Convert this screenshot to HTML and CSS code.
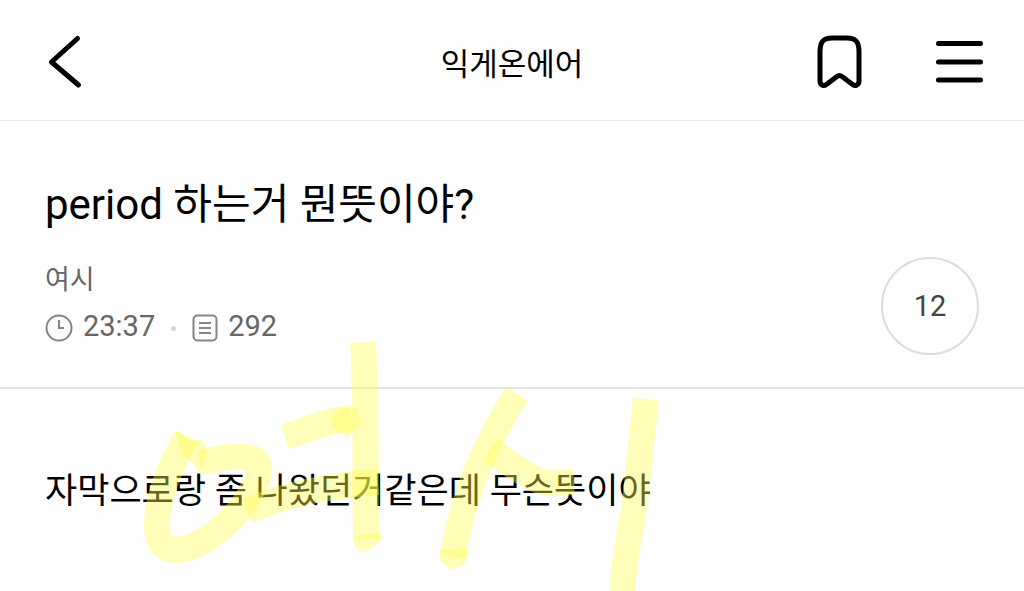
FILE: index.html
```html
<!DOCTYPE html>
<html lang="ko">
<head>
    <meta charset="utf-8" />
    <meta name="viewport" content="width=device-width, initial-scale=1" />
    <title>익게온에어</title>
    <link rel="stylesheet" href="styles.css">
</head>
<body>
    <header class="topbar">
        <button type="button" class="icon-btn" aria-label="뒤로">
            <svg width="48" height="60" viewBox="0 0 48 60" class="line-icon">
                <path d="M37.500 8.500L11.500 32L38.500 55" />
            </svg>
        </button>
        <div class="board">익게온에어</div>
        <div class="tools">
            <button type="button" class="icon-btn" aria-label="북마크">
                <svg width="48" height="60" viewBox="0 0 48 60" class="line-icon">
                    <path d="M4 22C4 11 8 8 16 8H31C39 8 43 11 43 22V51C43 55 39 57 36 54L26 46.500Q23.500 44.500 21 46.500L11 54C8 57 4 55 4 51Z" />
                </svg>
            </button>
            <button type="button" class="icon-btn" aria-label="메뉴">
                <svg width="48" height="60" viewBox="0 0 48 60" class="line-icon">
                    <path d="M2.500 13.500H44.500M2.500 32H44.500M2.500 50H44.500" />
                </svg>
            </button>
        </div>
    </header>

    <main class="post">
        <div class="post-head">
            <h1 class="title">period 하는거 뭔뜻이야?</h1>
            <div class="info">
                <div>
                    <div class="writer">여시</div>
                    <div class="meta">
                        <svg width="28" height="28" viewBox="0 0 28 28" class="meta-icon">
                            <circle cx="14" cy="14" r="12.500" />
                            <path d="M14 6V14H19" />
                        </svg>
                        <span>23:37</span>
                        <i class="dot"></i>
                        <svg width="26" height="28" viewBox="0 0 26 28" class="meta-icon">
                            <rect x="1.500" y="1.500" width="23" height="25" rx="4" />
                            <path d="M7 9H19M7 14H19M7 19H19" />
                        </svg>
                        <span>292</span>
                    </div>
                </div>
                <button type="button" class="comments" aria-label="댓글 12">12</button>
            </div>
        </div>

        <p class="content">자막으로랑 좀 나왔던거같은데 무슨뜻이야</p>

        <!-- highlighter writing over the post -->
        <svg class="marker" width="540" height="251" viewBox="130 340 540 251" aria-hidden="true">
            <path d="M187 437C168 469 157 498 157 527C157 545 167 551 178 550C205 547 234 520 247 499C259 479 263 466 255 460C246 453 222 457 200 463" />
            <path class="fill" d="M175 431L194 440L203 440L207 452L200 474L192 462L182 456Z" />
            <path d="M285 437C307 430 329 420 351 418" />
            <path class="fill" d="M332 418L340 409L355 407L361 424L347 438L333 428Z" />
            <path d="M247 511C289 493 330 486 378 482" />
            <path d="M363 342C367 407 365 473 366 539" />
            <path class="fill" d="M353 537L378 532L384 538L365 553L355 547Z" />
            <path d="M517 394C485 443 463 494 453 557" />
            <path class="fill" d="M440 550L465 548L469 554L463 566L450 570L440 561Z" />
            <path d="M490 450C515 467 536 484 552 483L574 482" />
            <path d="M646 399C643 429 639 463 636 494C631 530 624 559 622 591" />
        </svg>
    </main>
</body>
</html>
```
FILE: styles.css
```css
body {
    margin: 0;
    background: #fefefe;
    color: #000;
    font-family: Roboto, "Noto Sans CJK KR", sans-serif;
}

button {
    margin: 0;
    padding: 0;
    border: 0;
    background: none;
    color: inherit;
    font: inherit;
    cursor: pointer;
}

.topbar {
    display: grid;
    grid-template-columns: 1fr auto 1fr;
    align-items: center;
    height: 120px;
    padding: 0 40px;
    border-bottom: 1px solid #eee;
}

.icon-btn {
    justify-self: start;
}

.icon-btn svg,
.meta-icon {
    display: block;
}

.line-icon {
    fill: none;
    stroke: #000;
    stroke-width: 5;
    stroke-linecap: round;
    stroke-linejoin: round;
}

.board {
    padding-top: 10px;
    font-size: 31px;
    line-height: 40px;
}

.tools {
    display: flex;
    justify-content: flex-end;
    gap: 72px;
}

.post {
    position: relative;
}

.post-head {
    padding: 56px 45px 32px;
    border-bottom: 2px solid #e4e4e4;
}

.title {
    margin: 0 0 24px;
    font-size: 42px;
    font-weight: 400;
    line-height: 56px;
}

.info {
    display: flex;
    align-items: center;
    justify-content: space-between;
    color: #666;
}

.writer {
    font-size: 27px;
    line-height: 44px;
}

.meta {
    display: flex;
    align-items: center;
    gap: 10px;
    font-size: 29px;
    line-height: 48px;
}

.meta span {
    padding-bottom: 4px;
}

.meta-icon {
    fill: none;
    stroke: #858585;
    stroke-width: 2;
}

.dot {
    width: 5px;
    height: 5px;
    margin: 0 6px;
    border-radius: 50%;
    background: #d5d5d5;
}

.comments {
    box-sizing: border-box;
    width: 98px;
    height: 98px;
    border: 2px solid #ddd;
    border-radius: 50%;
    color: #444;
    font-size: 29px;
}

.content {
    margin: 0;
    padding: 78px 45px 74px;
    font-size: 35px;
    line-height: 50px;
}

.marker {
    position: absolute;
    top: 219px;
    left: 130px;
    fill: none;
    stroke: #ffff50;
    stroke-width: 26;
    stroke-opacity: 0.4;
    pointer-events: none;
}

.marker .fill {
    fill: #ffff50;
    fill-opacity: 0.4;
    stroke: none;
}
```
